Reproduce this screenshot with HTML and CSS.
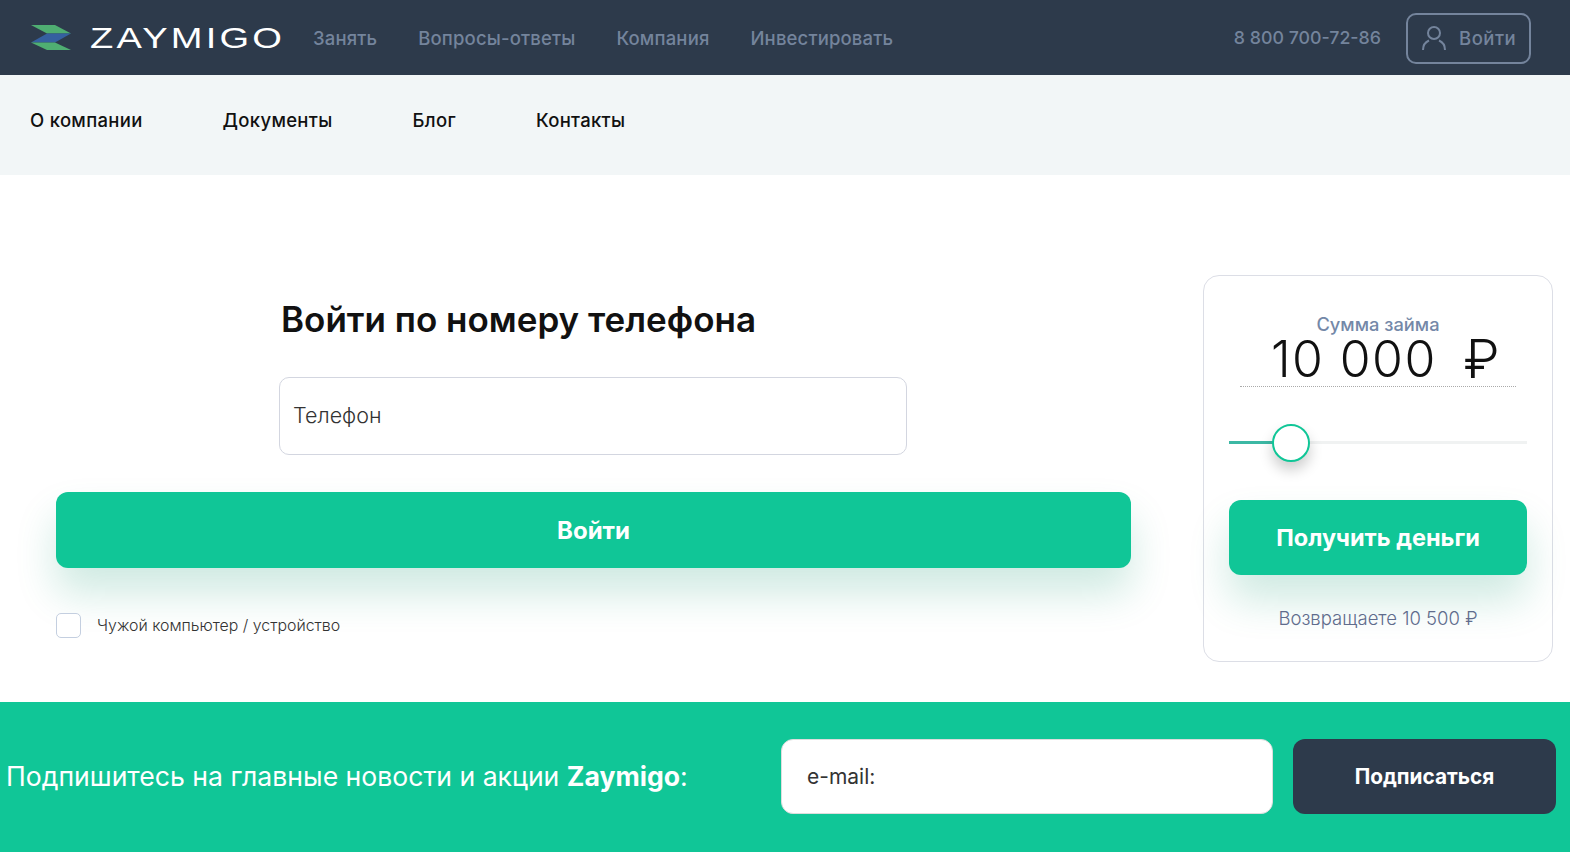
FILE: index.html

```html
<!DOCTYPE html>
<html lang="ru">
<head>
  <meta charset="UTF-8">
  <meta name="viewport" content="width=device-width, initial-scale=1.0">
  <title>Zaymigo</title>
  <link rel="stylesheet" href="styles.css">
</head>
<body>
  <header class="topbar">
    <a class="logo" href="#">
      <svg class="logo-mark" width="40" height="26" viewBox="0 0 40 26">
        <path d="M0 0H24L40 8.500H16Z" fill="#4fae72"/>
        <path d="M16 8.500H40L24 17.500H0Z" fill="#3560a0"/>
        <path d="M0 17.500H24L40 25H16Z" fill="#4fae72"/>
      </svg>
      <span class="logo-text">ZAYMIGO</span>
    </a>
    <nav class="topnav">
      <a href="#">Занять</a>
      <a href="#">Вопросы-ответы</a>
      <a href="#">Компания</a>
      <a href="#">Инвестировать</a>
    </nav>
    <span class="phone">8 800 700-72-86</span>
    <a class="login" href="#">
      <svg width="26" height="26" viewBox="0 0 26 26" fill="none" stroke="#74849c" stroke-width="2">
        <circle cx="13" cy="8" r="6"/>
        <path d="M2 25C2 20 4.500 17 8 15.500M24 25C24 20 21.500 17 18 15.500"/>
      </svg>
      <span>Войти</span>
    </a>
  </header>

  <nav class="subnav">
    <a href="#">О компании</a>
    <a href="#">Документы</a>
    <a href="#">Блог</a>
    <a href="#">Контакты</a>
  </nav>

  <main class="content">
    <form class="signin">
      <h1>Войти по номеру телефона</h1>
      <input class="phone-input" type="text" placeholder="Телефон">
      <button class="btn signin-btn" type="button">Войти</button>
      <label class="check">
        <span class="check-box"></span>
        <span>Чужой компьютер / устройство</span>
      </label>
    </form>

    <aside class="calc">
      <div class="calc-label">Сумма займа</div>
      <div class="calc-sum"><span>10 000</span><span class="calc-cur">₽</span></div>
      <div class="slider">
        <div class="slider-fill"></div>
        <div class="slider-knob"></div>
      </div>
      <button class="btn calc-btn" type="button">Получить деньги</button>
      <div class="calc-return">Возвращаете 10 500 ₽</div>
    </aside>
  </main>

  <section class="subscribe">
    <p>Подпишитесь на главные новости и акции <b>Zaymigo</b>:</p>
    <input class="mail-input" type="text" placeholder="e-mail:">
    <button class="mail-btn" type="button">Подписаться</button>
  </section>
</body>
</html>
```

FILE: styles.css

```css
* {
  box-sizing: border-box;
}

body {
  margin: 0;
  font-family: Inter, "Open Sans", sans-serif;
  background: #fff;
  color: #111;
}

a {
  text-decoration: none;
}

.topbar {
  display: flex;
  align-items: center;
  height: 75px;
  padding: 0 39px 0 31px;
  background: #2d3a4b;
}

.logo {
  display: flex;
  align-items: center;
  gap: 19px;
  width: 282px;
}

.logo-text {
  font-family: "Liberation Sans", sans-serif;
  font-size: 30px;
  letter-spacing: 2.500px;
  color: #fff;
  line-height: 1;
  transform: scaleX(1.27);
  transform-origin: left center;
}

.topnav {
  display: flex;
  gap: 41px;
}

.topnav a {
  font-size: 18.500px;
  font-weight: 500;
  letter-spacing: 0.150px;
  color: #74849c;
}

.phone {
  margin-left: auto;
  margin-right: 25px;
  font-size: 17.800px;
  font-weight: 500;
  color: #74849c;
}

.login {
  display: flex;
  align-items: center;
  gap: 12px;
  width: 125px;
  height: 51px;
  margin-top: 1px;
  padding-left: 13px;
  border: 2px solid #74849c;
  border-radius: 10px;
  font-size: 18.500px;
  font-weight: 500;
  letter-spacing: 0.500px;
  color: #74849c;
}

.subnav {
  display: flex;
  align-items: center;
  gap: 80px;
  height: 100px;
  padding: 0 30px 10px;
  background: #f2f6f7;
}

.subnav a {
  font-size: 18.500px;
  font-weight: 500;
  letter-spacing: 0.300px;
  color: #111;
}

.content {
  display: flex;
  align-items: flex-start;
  gap: 72px;
  height: 527px;
  padding: 100px 17px 0 56px;
}

.signin {
  display: flex;
  flex-direction: column;
  width: 1075px;
  margin-top: 20px;
}

.signin h1 {
  margin: 1px 0 34px 225px;
  font-size: 35px;
  font-weight: 600;
  line-height: 47px;
  color: #111;
}

.phone-input {
  align-self: flex-start;
  width: 628px;
  height: 78px;
  margin-left: 223px;
  padding: 0 13px 2px;
  border: 1px solid #d3d6e0;
  border-radius: 10px;
  font: 300 21.500px Inter, sans-serif;
}

.phone-input::placeholder {
  color: #333;
}

.btn {
  border: none;
  border-radius: 12px;
  background: #10c697;
  color: #fff;
  font-family: Inter, sans-serif;
  font-weight: 700;
}

.signin-btn {
  height: 76px;
  margin-top: 37px;
  font-size: 24px;
  box-shadow: 0 25px 40px rgba(16, 150, 110, 0.2);
}

.check {
  display: flex;
  align-items: center;
  gap: 16px;
  margin-top: 45px;
  font-size: 15.900px;
  font-weight: 300;
  color: #333;
}

.check-box {
  width: 25px;
  height: 25px;
  border: 1px solid #c4cfe0;
  border-radius: 5px;
  background: #fff;
}

.calc {
  display: flex;
  flex-direction: column;
  width: 350px;
  height: 387px;
  padding: 37px 25px 0;
  border: 1px solid #dcdee6;
  border-radius: 16px;
}

.calc-label {
  font-size: 18.300px;
  font-weight: 500;
  line-height: 23px;
  color: #7488a8;
  text-align: center;
}

.calc-sum {
  display: flex;
  justify-content: space-between;
  height: 51px;
  margin: 0 11px;
  padding: 0 15px 0 31px;
  border-bottom: 1px dotted #aaa;
  font-size: 50px;
  font-weight: 300;
  letter-spacing: 1.400px;
  line-height: 46px;
  color: #111;
}

.calc-cur {
  font-size: 54px;
}

.slider {
  position: relative;
  height: 3px;
  margin-top: 54px;
  background: #f0f2f2;
}

.slider-fill {
  width: 50px;
  height: 3px;
  background: #3cb8a4;
}

.slider-knob {
  position: absolute;
  left: 43px;
  top: -17px;
  width: 38px;
  height: 38px;
  border: 2px solid #10c697;
  border-radius: 50%;
  background: #fff;
  box-shadow: 0 8px 14px rgba(0, 0, 0, 0.2);
}

.calc-btn {
  height: 75px;
  margin-top: 56px;
  font-size: 23.500px;
  box-shadow: 0 25px 40px rgba(16, 150, 110, 0.2);
}

.calc-return {
  margin-top: 32px;
  font-size: 18.500px;
  font-weight: 300;
  color: #606c8c;
  text-align: center;
}

.subscribe {
  display: flex;
  align-items: center;
  height: 150px;
  padding: 0 14px 1px 6px;
  background: #10c697;
}

.subscribe p {
  width: 775px;
  margin: 0;
  padding-bottom: 2px;
  font-size: 26.600px;
  font-weight: 400;
  color: #fff;
}

.mail-input {
  width: 492px;
  height: 75px;
  padding: 0 25px;
  border: 1px solid #ddd;
  border-radius: 12px;
  font: 21px Inter, sans-serif;
}

.mail-input::placeholder {
  color: #333;
}

.mail-btn {
  width: 263px;
  height: 75px;
  margin-left: 20px;
  border: none;
  border-radius: 12px;
  background: #2d3a4b;
  color: #fff;
  font: 700 20.800px Inter, sans-serif;
}
```
